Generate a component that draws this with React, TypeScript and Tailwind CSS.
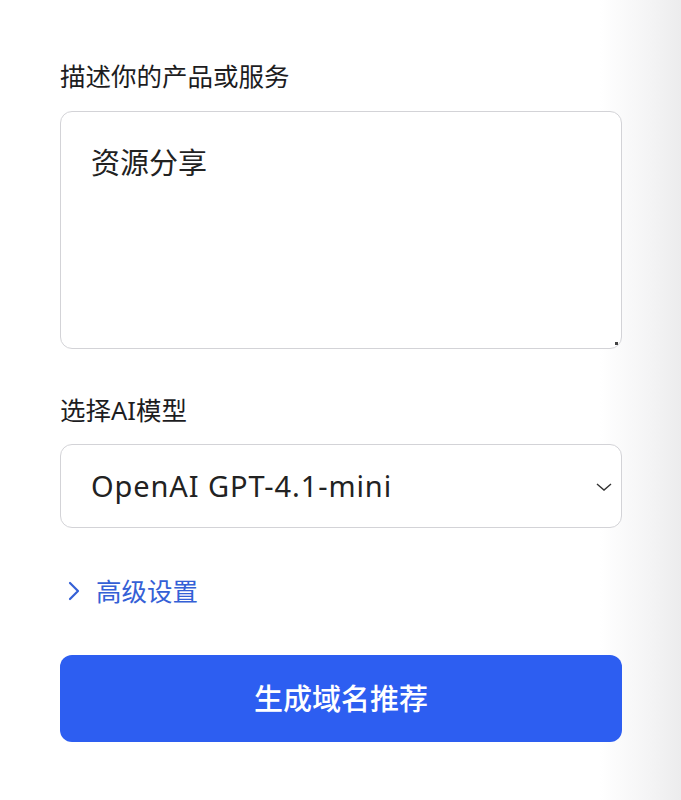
import React from "react";

export default function App() {
  return (
    <div
      className="w-full min-h-[800px] bg-[linear-gradient(to_right,#ffffff_0px,#ffffff_600px,#f4f4f5_650px,#ececed_681px)]"
      style={{ fontFamily: '"Noto Sans", "Noto Sans CJK SC", sans-serif' }}
    >
      <div className="flex flex-col pl-[60px] pr-[59px] pt-[58px]">
        <label className="text-[25.5px] leading-[36px] text-[#1d1d1f] mb-[17px]">
          描述你的产品或服务
        </label>
        <div className="relative h-[238px] rounded-[12px] border border-[#d3d3d7] bg-white">
          <textarea
            className="w-full h-full resize-none bg-transparent outline-none pl-[30px] pr-[20px] pt-[30px] text-[29px] leading-[42px] text-[#222222]"
            defaultValue="资源分享"
            style={{ fontFamily: '"Noto Sans", "Noto Sans CJK SC", sans-serif' }}
          />
          <span className="absolute right-[3px] bottom-[3px] w-[3px] h-[3px] bg-[#444]" />
        </div>

        <label className="mt-[43px] text-[25.5px] leading-[36px] text-[#1d1d1f] mb-[16px]">
          选择AI模型
        </label>
        <div className="h-[84px] rounded-[12px] border border-[#d3d3d7] bg-white flex items-center justify-between pl-[30px] pr-[8px]">
          <span className="text-[29px] tracking-[0.9px] text-[#222222]">OpenAI GPT-4.1-mini</span>
          <svg width="18" height="12" viewBox="0 0 18 12" fill="none" className="mt-[2px]">
            <path d="M2 3 L9 9 L16 3" stroke="#333" strokeWidth="1.4" />
          </svg>
        </div>

        <button className="mt-[45px] self-start flex items-center gap-[16px] pl-[8px] text-[#3460d6]">
          <svg width="12" height="20" viewBox="0 0 12 20" fill="none">
            <path d="M2 2 L10 10 L2 18" stroke="#3460d6" strokeWidth="2.2" strokeLinecap="round" strokeLinejoin="round" />
          </svg>
          <span className="text-[25.5px] leading-[36px]">高级设置</span>
        </button>

        <button className="mt-[46px] h-[87px] rounded-[12px] bg-[#2d5ef1] text-white text-[29px] font-medium flex items-center justify-center">
          生成域名推荐
        </button>
      </div>
    </div>
  );
}
